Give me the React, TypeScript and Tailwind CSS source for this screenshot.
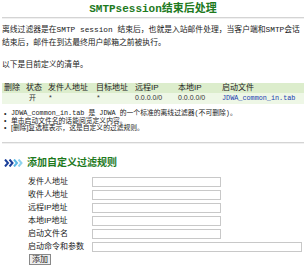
import React from "react";

const mono = { fontFamily: '"Liberation Mono","Noto Sans CJK SC",monospace' };
const sans = { fontFamily: '"Liberation Sans","Noto Sans CJK SC",sans-serif' };

function Chevrons() {
  return (
    <svg width="19" height="8" viewBox="0 0 19 8" className="shrink-0">
      <path d="M1 0.5 L4 4 L1 7.5" stroke="#1b3f9a" strokeWidth="2" fill="none" />
      <path d="M5.5 0.5 L8.5 4 L5.5 7.5" stroke="#1b3f9a" strokeWidth="2" fill="none" />
      <path d="M10 0.5 L13 4 L10 7.5" stroke="#5bb8e4" strokeWidth="2" fill="none" />
      <path d="M14.5 0.5 L17.5 4 L14.5 7.5" stroke="#8fd3ef" strokeWidth="2" fill="none" />
    </svg>
  );
}

function Field({ label, wide }: { label: string; wide?: boolean }) {
  return (
    <div className="flex items-center h-[13px]">
      <div className="w-[92px] pl-[28px] shrink-0 text-[8px] leading-[10px] text-[#222] whitespace-nowrap" style={sans}>
        {label}
      </div>
      <div
        className={`h-[10px] border border-[#c8c8c8] bg-white ${wide ? "w-[210px]" : "w-[129px]"}`}
      />
    </div>
  );
}

export default function App() {
  const cols = ["w-[22px]", "w-[22px]", "w-[48px]", "w-[39px]", "w-[43px]", "w-[44px]", "flex-1"];
  const head = ["删除", "状态", "发件人地址", "目标地址", "远程IP", "本地IP", "启动文件"];
  return (
    <div className="w-[306px] h-[273px] bg-white overflow-hidden text-[#222]" style={sans}>
      <div className="pt-[3px] text-center text-[11px] leading-[12px] font-bold text-[#1e7a1e]" style={mono}>
        SMTPsession结束后处理
      </div>
      <div className="mx-[2px] mt-[2px] h-[2px] border-t border-[#d4d4d4] bg-[#f0f0f0]" />
      <div className="px-[2px] mt-[5px] text-[7.8px] leading-[13px] whitespace-nowrap" style={mono}>
        离线过滤器是在SMTP session 结束后，也就是入站邮件处理，当客户端和SMTP会话
        <br />
        结束后，邮件在到达最终用户邮箱之前被执行。
      </div>
      <div className="px-[2px] mt-[9px] text-[7.8px] leading-[12px]" style={sans}>
        以下是目前定义的清单。
      </div>
      <div className="mx-[2px] mt-[12px] text-[8px]">
        <div className="flex items-center h-[10px] bg-[#dcedcc] pl-[2px]">
          {head.map((h, i) => (
            <div key={i} className={`${cols[i]} shrink-0 whitespace-nowrap leading-[10px]`}>
              {h}
            </div>
          ))}
        </div>
        <div className="flex items-center h-[11px] bg-[#eef7e6] pl-[2px] text-[7px] text-[#333]">
          <div className={`${cols[0]} shrink-0`} />
          <div className={`${cols[1]} shrink-0 pl-[3px]`}>开</div>
          <div className={`${cols[2]} shrink-0 pl-[1px]`}>*</div>
          <div className={`${cols[3]} shrink-0 pl-[1px]`}>*</div>
          <div className={`${cols[4]} shrink-0`}>0.0.0.0/0</div>
          <div className={`${cols[5]} shrink-0`}>0.0.0.0/0</div>
          <div className="flex-1 text-[6.8px] text-[#2040b0]" style={mono}>
            JDWA_common_in.tab
          </div>
        </div>
      </div>
      <ul className="mt-[6px] pl-[4px] text-[6.8px] leading-[7px] text-[#222]">
        <li className="flex items-center whitespace-nowrap">
          <span className="w-[7px] shrink-0 text-[7px]">•</span>
          <span style={mono}>JDWA_common_in.tab 是 JDWA 的一个标准的离线过滤器(不可删除)。</span>
        </li>
        <li className="flex items-center whitespace-nowrap">
          <span className="w-[7px] shrink-0 text-[7px]">•</span>
          <span>单击启动文件名的话能阅览定义内容。</span>
        </li>
        <li className="flex items-center whitespace-nowrap">
          <span className="w-[7px] shrink-0 text-[7px]">•</span>
          <span>[删除]复选框表示，这是自定义的过滤规则。</span>
        </li>
      </ul>
      <div className="mx-[2px] mt-[11px] h-[2px] border-t border-[#d4d4d4] bg-[#f0f0f0]" />
      <div className="flex items-center gap-[4px] pl-[4px] mt-[13px] h-[12px]">
        <Chevrons />
        <div className="text-[10px] leading-[12px] font-bold text-[#1e7a1e]">添加自定义过滤规则</div>
      </div>
      <div className="mt-[6px] flex flex-col">
        <Field label="发件人地址" />
        <Field label="收件人地址" />
        <Field label="远程IP地址" />
        <Field label="本地IP地址" />
        <Field label="启动文件名" />
        <Field label="启动命令和参数" wide />
      </div>
      <div className="pl-[29px] mt-[1px]">
        <button className="block h-[11px] px-[2px] border border-[#888] bg-[#eee] text-[8px] leading-[9px] text-[#222]">
          添加
        </button>
      </div>
    </div>
  );
}
